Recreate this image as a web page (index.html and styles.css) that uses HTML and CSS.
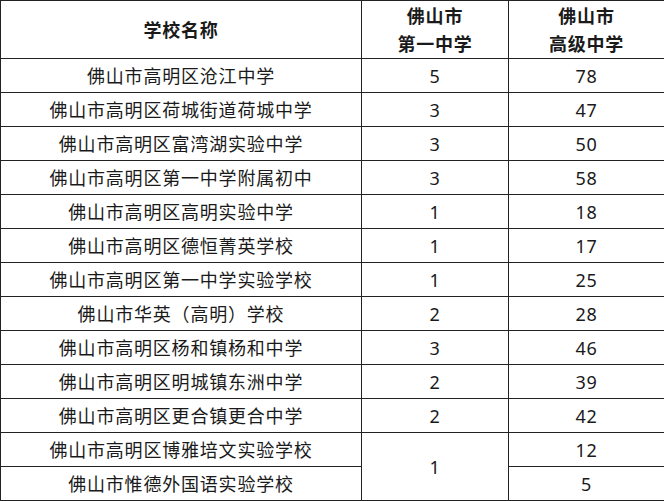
FILE: index.html
```html
<!DOCTYPE html>
<html lang="zh">
<head>
<meta charset="utf-8">
<link rel="stylesheet" href="styles.css">
</head>
<body>
<table class="tbl">
  <colgroup>
    <col class="c1">
    <col class="c2">
    <col class="c3">
  </colgroup>
  <thead>
    <tr class="head">
      <th>学校名称</th>
      <th>佛山市<br>第一中学</th>
      <th>佛山市<br>高级中学</th>
    </tr>
  </thead>
  <tbody>
    <tr><td>佛山市高明区沧江中学</td><td>5</td><td>78</td></tr>
    <tr><td>佛山市高明区荷城街道荷城中学</td><td>3</td><td>47</td></tr>
    <tr><td>佛山市高明区富湾湖实验中学</td><td>3</td><td>50</td></tr>
    <tr><td>佛山市高明区第一中学附属初中</td><td>3</td><td>58</td></tr>
    <tr><td>佛山市高明区高明实验中学</td><td>1</td><td>18</td></tr>
    <tr><td>佛山市高明区德恒菁英学校</td><td>1</td><td>17</td></tr>
    <tr><td>佛山市高明区第一中学实验学校</td><td>1</td><td>25</td></tr>
    <tr><td>佛山市华英（高明）学校</td><td>2</td><td>28</td></tr>
    <tr><td>佛山市高明区杨和镇杨和中学</td><td>3</td><td>46</td></tr>
    <tr><td>佛山市高明区明城镇东洲中学</td><td>2</td><td>39</td></tr>
    <tr><td>佛山市高明区更合镇更合中学</td><td>2</td><td>42</td></tr>
    <tr><td>佛山市高明区博雅培文实验学校</td><td rowspan="2">1</td><td>12</td></tr>
    <tr><td>佛山市惟德外国语实验学校</td><td>5</td></tr>
  </tbody>
</table>
</body>
</html>
```

FILE: styles.css
```css
html, body {
  margin: 0;
  padding: 0;
  background: #ffffff;
}
.tbl {
  border-collapse: collapse;
  table-layout: fixed;
  width: 664px;
  font-family: "Noto Sans", "Noto Sans CJK SC", sans-serif;
  color: #1a1a1a;
  font-size: 18px;
}
.c1 { width: 361px; }
.c2 { width: 147px; }
.c3 { width: 156px; }
.tbl th, .tbl td {
  border: 1px solid #222;
  padding: 0;
  text-align: center;
  vertical-align: middle;
  letter-spacing: 0.8px;
  line-height: 28px;
}
.tbl th {
  font-weight: bold;
  height: 57px;
}
.tbl td {
  height: 33px;
}
```
